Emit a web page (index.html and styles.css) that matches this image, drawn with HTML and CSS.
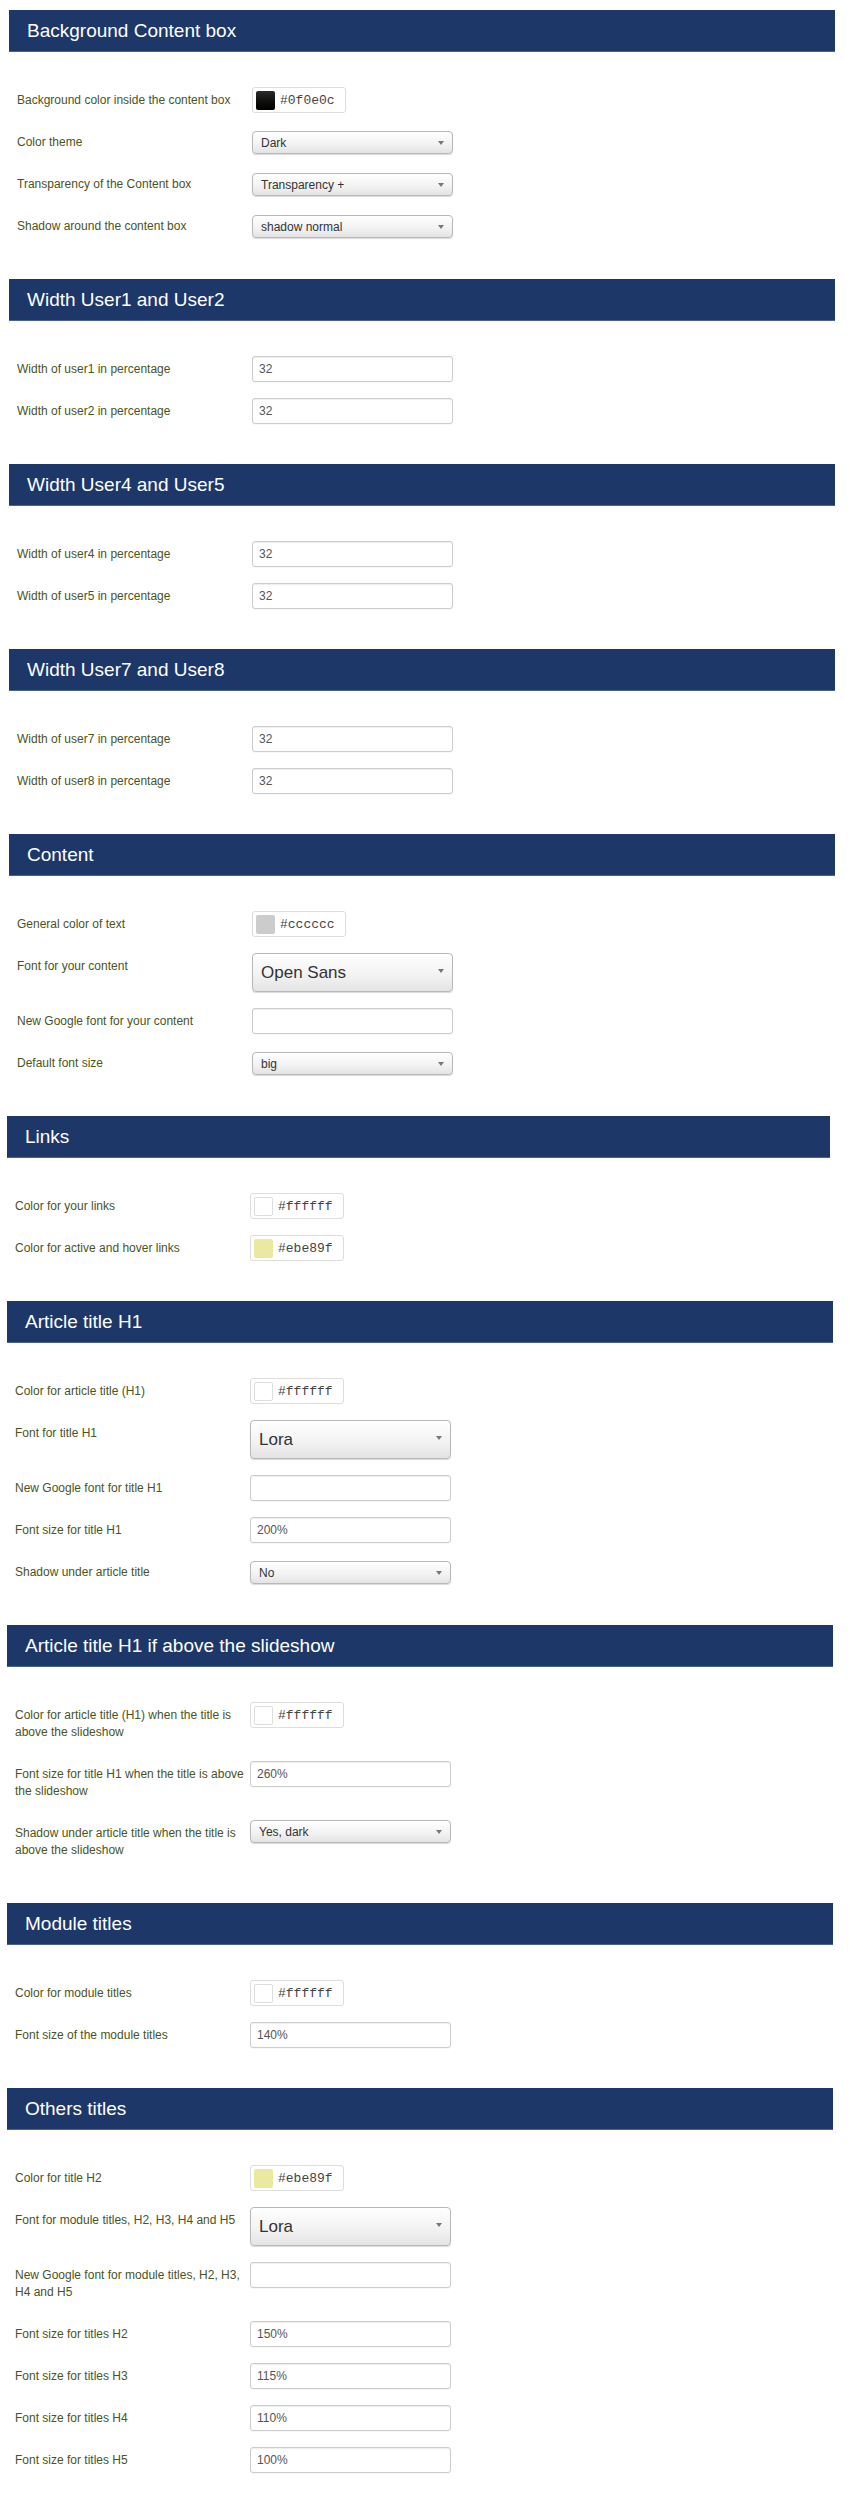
FILE: index.html
```html
<!DOCTYPE html>
<html lang="en">
<head>
  <meta charset="UTF-8">
  <title>Template options</title>
  <link rel="stylesheet" href="styles.css">
</head>
<body>
  <div class="page">

    <div class="section">
      <h2 class="section-title">Background Content box</h2>
      <div class="section-body">
        <div class="row">
          <label class="row-label">Background color inside the content box</label>
          <div class="color-field"><span class="swatch swatch-dark"></span><span class="color-code">#0f0e0c</span></div>
        </div>
        <div class="row">
          <label class="row-label">Color theme</label>
          <span class="select-wrap"><select><option>Dark</option></select></span>
        </div>
        <div class="row">
          <label class="row-label">Transparency of the Content box</label>
          <span class="select-wrap"><select><option>Transparency +</option></select></span>
        </div>
        <div class="row">
          <label class="row-label">Shadow around the content box</label>
          <span class="select-wrap"><select><option>shadow normal</option></select></span>
        </div>
      </div>
    </div>

    <div class="section">
      <h2 class="section-title">Width User1 and User2</h2>
      <div class="section-body">
        <div class="row">
          <label class="row-label">Width of user1 in percentage</label>
          <input type="text" value="32">
        </div>
        <div class="row">
          <label class="row-label">Width of user2 in percentage</label>
          <input type="text" value="32">
        </div>
      </div>
    </div>

    <div class="section">
      <h2 class="section-title">Width User4 and User5</h2>
      <div class="section-body">
        <div class="row">
          <label class="row-label">Width of user4 in percentage</label>
          <input type="text" value="32">
        </div>
        <div class="row">
          <label class="row-label">Width of user5 in percentage</label>
          <input type="text" value="32">
        </div>
      </div>
    </div>

    <div class="section">
      <h2 class="section-title">Width User7 and User8</h2>
      <div class="section-body">
        <div class="row">
          <label class="row-label">Width of user7 in percentage</label>
          <input type="text" value="32">
        </div>
        <div class="row">
          <label class="row-label">Width of user8 in percentage</label>
          <input type="text" value="32">
        </div>
      </div>
    </div>

    <div class="section">
      <h2 class="section-title">Content</h2>
      <div class="section-body">
        <div class="row">
          <label class="row-label">General color of text</label>
          <div class="color-field"><span class="swatch swatch-grey"></span><span class="color-code">#cccccc</span></div>
        </div>
        <div class="row">
          <label class="row-label">Font for your content</label>
          <span class="select-wrap big"><select><option>Open Sans</option></select></span>
        </div>
        <div class="row">
          <label class="row-label">New Google font for your content</label>
          <input type="text" value="">
        </div>
        <div class="row">
          <label class="row-label">Default font size</label>
          <span class="select-wrap"><select><option>big</option></select></span>
        </div>
      </div>
    </div>

    <div class="section shifted links">
      <h2 class="section-title">Links</h2>
      <div class="section-body">
        <div class="row">
          <label class="row-label">Color for your links</label>
          <div class="color-field"><span class="swatch swatch-white"></span><span class="color-code">#ffffff</span></div>
        </div>
        <div class="row">
          <label class="row-label">Color for active and hover links</label>
          <div class="color-field"><span class="swatch swatch-yellow"></span><span class="color-code">#ebe89f</span></div>
        </div>
      </div>
    </div>

    <div class="section shifted">
      <h2 class="section-title">Article title H1</h2>
      <div class="section-body">
        <div class="row">
          <label class="row-label">Color for article title (H1)</label>
          <div class="color-field"><span class="swatch swatch-white"></span><span class="color-code">#ffffff</span></div>
        </div>
        <div class="row">
          <label class="row-label">Font for title H1</label>
          <span class="select-wrap big"><select><option>Lora</option></select></span>
        </div>
        <div class="row">
          <label class="row-label">New Google font for title H1</label>
          <input type="text" value="">
        </div>
        <div class="row">
          <label class="row-label">Font size for title H1</label>
          <input type="text" value="200%">
        </div>
        <div class="row">
          <label class="row-label">Shadow under article title</label>
          <span class="select-wrap"><select><option>No</option></select></span>
        </div>
      </div>
    </div>

    <div class="section shifted">
      <h2 class="section-title">Article title H1 if above the slideshow</h2>
      <div class="section-body">
        <div class="row">
          <label class="row-label">Color for article title (H1) when the title is above the slideshow</label>
          <div class="color-field"><span class="swatch swatch-white"></span><span class="color-code">#ffffff</span></div>
        </div>
        <div class="row">
          <label class="row-label">Font size for title H1 when the title is above the slideshow</label>
          <input type="text" value="260%">
        </div>
        <div class="row">
          <label class="row-label">Shadow under article title when the title is above the slideshow</label>
          <span class="select-wrap flush"><select><option>Yes, dark</option></select></span>
        </div>
      </div>
    </div>

    <div class="section shifted">
      <h2 class="section-title">Module titles</h2>
      <div class="section-body">
        <div class="row">
          <label class="row-label">Color for module titles</label>
          <div class="color-field"><span class="swatch swatch-white"></span><span class="color-code">#ffffff</span></div>
        </div>
        <div class="row">
          <label class="row-label">Font size of the module titles</label>
          <input type="text" value="140%">
        </div>
      </div>
    </div>

    <div class="section shifted">
      <h2 class="section-title">Others titles</h2>
      <div class="section-body">
        <div class="row">
          <label class="row-label">Color for title H2</label>
          <div class="color-field"><span class="swatch swatch-yellow"></span><span class="color-code">#ebe89f</span></div>
        </div>
        <div class="row">
          <label class="row-label">Font for module titles, H2, H3, H4 and H5</label>
          <span class="select-wrap big"><select><option>Lora</option></select></span>
        </div>
        <div class="row">
          <label class="row-label">New Google font for module titles, H2, H3, H4 and H5</label>
          <input type="text" value="">
        </div>
        <div class="row">
          <label class="row-label">Font size for titles H2</label>
          <input type="text" value="150%">
        </div>
        <div class="row">
          <label class="row-label">Font size for titles H3</label>
          <input type="text" value="115%">
        </div>
        <div class="row">
          <label class="row-label">Font size for titles H4</label>
          <input type="text" value="110%">
        </div>
        <div class="row">
          <label class="row-label">Font size for titles H5</label>
          <input type="text" value="100%">
        </div>
      </div>
    </div>

  </div>
</body>
</html>
```

FILE: styles.css
```css
body {
  margin: 0;
  background: #fff;
  font-family: "Liberation Sans", Arial, sans-serif;
  font-size: 12px;
  color: #333;
}
.page {
  padding-top: 10px;
}
.section {
  margin-left: 9px;
  width: 826px;
}
.section.shifted {
  margin-left: 7px;
}
.section.links {
  width: 823px;
}
.section-title {
  margin: 0;
  height: 42px;
  line-height: 42px;
  padding-left: 18px;
  background: #1d3768;
  border-bottom: 1px solid #4a6290;
  box-sizing: border-box;
  color: #fff;
  font-size: 19px;
  font-weight: normal;
}
.section-body {
  padding: 35px 0 24px 8px;
}
.row {
  display: flex;
  align-items: flex-start;
  min-height: 26px;
  margin-bottom: 16px;
}
.row-label {
  flex: 0 0 235px;
  padding: 5px 0 4px;
  line-height: 17px;
  color: #4b5323;
}
input[type="text"] {
  width: 201px;
  height: 26px;
  box-sizing: border-box;
  margin: 0;
  padding: 0 6px;
  border: 1px solid #ccc;
  border-radius: 3px;
  box-shadow: inset 0 1px 1px rgba(0,0,0,0.07), 0 1px 0 rgba(0,0,0,0.03);
  font-family: "Liberation Sans", Arial, sans-serif;
  font-size: 12px;
  color: #555;
}
.color-field {
  display: flex;
  align-items: center;
  gap: 5px;
  width: 94px;
  height: 26px;
  box-sizing: border-box;
  padding-left: 3px;
  border: 1px solid #ddd;
  border-radius: 3px;
}
.swatch {
  width: 19px;
  height: 19px;
  box-sizing: border-box;
  border-radius: 2px;
}
.swatch-dark {
  background: linear-gradient(#2a2a2a, #0f0e0c 55%, #000);
}
.swatch-grey {
  background: #cccccc;
}
.swatch-white {
  background: #fff;
  border: 1px solid #ddd;
}
.swatch-yellow {
  background: #ebe89f;
}
.color-code {
  font-family: "Liberation Mono", "DejaVu Sans Mono", monospace;
  font-size: 13px;
  color: #444;
}
.select-wrap {
  position: relative;
  display: block;
  margin-top: 2px;
}
.select-wrap.flush {
  margin-top: 0;
}
.select-wrap select {
  appearance: none;
  -webkit-appearance: none;
  display: block;
  width: 201px;
  height: 23px;
  margin: 0;
  padding: 0 20px 0 8px;
  border: 1px solid #b8b8b8;
  border-radius: 4px;
  background: linear-gradient(#fff, #f3f3f3 55%, #e4e4e4);
  box-shadow: 0 1px 1px rgba(0,0,0,0.15);
  font-family: "Liberation Sans", Arial, sans-serif;
  font-size: 12px;
  color: #333;
}
.select-wrap::after {
  content: "";
  position: absolute;
  right: 9px;
  top: 50%;
  margin-top: -2px;
  border-left: 3px solid transparent;
  border-right: 3px solid transparent;
  border-top: 4px solid #777;
}
.select-wrap.big {
  margin-top: 0;
}
.select-wrap.big select {
  height: 39px;
  font-size: 17px;
}
.select-wrap.big::after {
  margin-top: -4px;
}
```
